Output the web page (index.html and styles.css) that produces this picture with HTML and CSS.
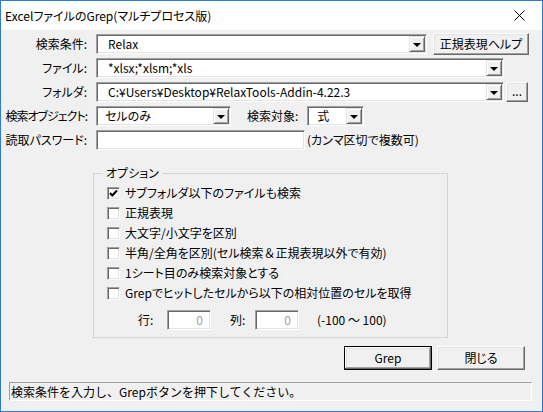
FILE: index.html
```html
<!DOCTYPE html>
<html lang="ja">
<head>
  <meta charset="UTF-8" />
  <title>ExcelファイルのGrep(マルチプロセス版)</title>
  <link rel="stylesheet" href="styles.css">
</head>
<body>
  <div class="window">
    <div class="titlebar">
      <span class="title">ExcelファイルのGrep(マルチプロセス版)</span>
      <svg class="close" width="11" height="11" viewBox="0 0 11 11">
        <path d="M0.5 0.5 L10.5 10.5 M10.5 0.5 L0.5 10.5" stroke="#000" stroke-width="1" fill="none" />
      </svg>
    </div>

    <div class="content">
      <div class="row">
        <span class="lbl">検索条件:</span>
        <div class="combo cond"><span class="val">Relax</span><span class="drop"></span></div>
        <button class="btn help">正規表現ヘルプ</button>
      </div>
      <div class="row">
        <span class="lbl">ファイル:</span>
        <div class="combo wide"><span class="val">*xlsx;*xlsm;*xls</span><span class="drop"></span></div>
      </div>
      <div class="row">
        <span class="lbl">フォルダ:</span>
        <div class="combo wide"><span class="val">C:¥Users¥Desktop¥RelaxTools-Addin-4.22.3</span><span class="drop"></span></div>
        <button class="btn dots">...</button>
      </div>
      <div class="row">
        <span class="lbl tight">検索オブジェクト:</span>
        <div class="combo obj"><span class="val">セルのみ</span><span class="drop"></span></div>
        <span class="lbl2">検索対象:</span>
        <div class="combo target"><span class="val">式</span><span class="drop"></span></div>
      </div>
      <div class="row">
        <span class="lbl">読取パスワード:</span>
        <div class="field pass"></div>
        <span class="note">(カンマ区切で複数可)</span>
      </div>

      <fieldset class="options">
        <legend>オプション</legend>
        <div class="opts">
          <div class="chk"><span class="box"><svg width="11" height="11" viewBox="0 0 11 11"><path d="M2 5 L4.3 7.5 L9 2.5" stroke="#000" stroke-width="2" fill="none" /></svg></span>サブフォルダ以下のファイルも検索</div>
          <div class="chk"><span class="box"></span>正規表現</div>
          <div class="chk"><span class="box"></span>大文字/小文字を区別</div>
          <div class="chk"><span class="box"></span>半角/全角を区別(セル検索<span class="np">＆</span>正規表現以外で有効)</div>
          <div class="chk"><span class="box"></span>1シート目のみ検索対象とする</div>
          <div class="chk"><span class="box"></span>Grepでヒットしたセルから以下の相対位置のセルを取得</div>
        </div>
        <div class="offset">
          <span class="olbl row-l">行:</span>
          <div class="field num">0</div>
          <span class="olbl col-l">列:</span>
          <div class="field num">0</div>
          <span class="range">(-100 ～ 100)</span>
        </div>
      </fieldset>

      <div class="actions">
        <button class="btn big default">Grep</button>
        <button class="btn big">閉じる</button>
      </div>

      <div class="status">検索条件を入力し、Grepボタンを押下してください。</div>
    </div>
  </div>
</body>
</html>
```

FILE: styles.css
```css
body {
  margin: 0;
  background: #f0f0f0;
}
.window {
  width: 543px;
  height: 412px;
  box-sizing: border-box;
  border: 1px solid #2f7bd4;
  background: #f0f0f0;
  font-family: "Noto Sans CJK JP", sans-serif;
  font-size: 12px;
  line-height: 16px;
  font-feature-settings: "palt";
  color: #000;
  display: flex;
  flex-direction: column;
}
.titlebar {
  height: 29px;
  background: #fff;
  display: flex;
  align-items: center;
  justify-content: space-between;
  padding: 0 17px 0 4px;
}
.close {
  display: block;
}
.content {
  padding-top: 2px;
}
.row {
  display: flex;
  align-items: center;
  height: 24px;
}
.lbl {
  width: 88px;
  flex-shrink: 0;
  padding-right: 2px;
  text-align: right;
  box-sizing: border-box;
  margin-right: 7px;
  white-space: nowrap;
}
.tight {
  letter-spacing: -1px;
}

/* sunken boxes */
.combo,
.field {
  height: 20px;
  box-sizing: border-box;
  background: #fff;
  border: 1px solid;
  border-color: #a0a0a0 #fff #fff #a0a0a0;
  box-shadow: inset 1px 1px #696969, inset -1px -1px #e3e3e3;
  padding: 1px;
}
.combo {
  display: flex;
  align-items: center;
}
.combo .val {
  flex: 1;
  padding-left: 10px;
  white-space: nowrap;
  overflow: hidden;
}
.combo .drop {
  width: 16px;
  height: 16px;
  box-sizing: border-box;
  background: #f0f0f0;
  border: 1px solid;
  border-color: #e3e3e3 #696969 #696969 #e3e3e3;
  box-shadow: inset 1px 1px #fff, inset -1px -1px #a0a0a0;
  display: flex;
  align-items: center;
  justify-content: center;
}
.combo .drop::after {
  content: "";
  border-left: 4px solid transparent;
  border-right: 4px solid transparent;
  border-top: 4px solid #000;
  margin-top: 1px;
}
.cond {
  width: 331px;
}
.wide {
  width: 408px;
}
.obj {
  width: 135px;
}
.obj .val {
  padding-left: 7px;
}
.target {
  width: 57px;
}
.target .val {
  padding-left: 8px;
}
.lbl2 {
  margin: 0 9px 0 16px;
}
.pass {
  width: 209px;
}
.note {
  margin-left: 2px;
}

/* raised buttons */
.btn {
  font: inherit;
  color: #000;
  background: #f0f0f0;
  border: 1px solid;
  border-color: #fff #696969 #696969 #fff;
  box-shadow: inset -1px -1px #a0a0a0, inset 1px 1px #e3e3e3;
  padding: 0;
  box-sizing: border-box;
}
.help {
  width: 96px;
  height: 22px;
  margin-left: 6px;
}
.dots {
  width: 22px;
  height: 20px;
  margin-left: 2px;
  line-height: 12px;
  padding-bottom: 2px;
}

/* option group */
.options {
  margin: 14px 0 0 92px;
  width: 355px;
  box-sizing: border-box;
  border: 1px solid #d5d5d5;
  padding: 0 0 7px 0;
}
.options legend {
  margin-left: 9px;
  padding: 0 3px;
  line-height: 14px;
}
.opts {
  padding: 3px 0 0 13px;
}
.chk {
  display: flex;
  align-items: center;
  height: 20px;
  white-space: nowrap;
}
.np {
  font-feature-settings: normal;
}
.box {
  width: 13px;
  height: 13px;
  box-sizing: border-box;
  background: #fff;
  border: 1px solid;
  border-color: #a0a0a0 #fff #fff #a0a0a0;
  box-shadow: inset 1px 1px #696969, inset -1px -1px #e3e3e3;
  margin-right: 5px;
  display: flex;
  align-items: center;
  justify-content: center;
}
.box svg {
  display: block;
}
.offset {
  display: flex;
  align-items: center;
  height: 20px;
  margin-top: 7px;
  padding-left: 44px;
}
.olbl {
  width: 29px;
}
.col-l {
  width: 25px;
  margin-left: 19px;
}
.num {
  width: 44px;
  text-align: right;
  padding-right: 7px;
  color: #a0a0a0;
  line-height: 16px;
}
.range {
  margin-left: 18px;
}

.actions {
  display: flex;
  justify-content: flex-end;
  gap: 5px;
  margin-top: 8px;
  padding-right: 17px;
}
.big {
  width: 88px;
  height: 24px;
}
.default {
  border: 1px solid #000;
  box-shadow: inset -1px -1px #696969, inset 1px 1px #fff, inset -2px -2px #a0a0a0, inset 2px 2px #e3e3e3;
}

.status {
  margin: 12px 10px 0 8px;
  height: 19px;
  box-sizing: border-box;
  border: 1px solid;
  border-color: #a0a0a0 #fff #fff #a0a0a0;
  line-height: 17px;
  padding-left: 1px;
  white-space: nowrap;
  font-feature-settings: normal;
}
```
